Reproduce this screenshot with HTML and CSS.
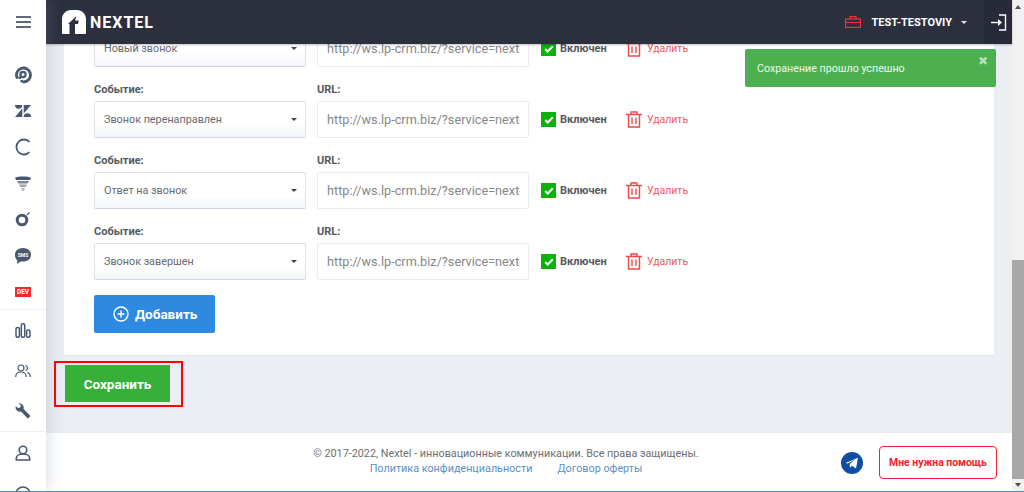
FILE: index.html
```html
<!DOCTYPE html>
<html lang="ru">
<head>
<meta charset="utf-8">
<title>Nextel</title>
<link rel="stylesheet" href="styles.css">
</head>
<body>
<div class="app">
  <aside class="sidebar">
    <div class="burger"><span></span><span></span><span></span></div>
    <nav class="nav-group nav-a">
      <a class="nav-item"><svg width="18" height="18" viewBox="0 0 18 18"><path d="M3.400 12.500A7 7 0 1 1 9 16" fill="none" stroke="#485870" stroke-width="2.800"/><circle cx="9" cy="8.500" r="2.600" fill="none" stroke="#485870" stroke-width="2.200"/><path d="M4.500 10.500h2.500V13H4.500zM6.500 14H9v2.500H6.500z" fill="#485870"/></svg></a>
      <a class="nav-item"><svg width="16" height="12" viewBox="0 0 16 12"><path d="M0 0h7.300a3.650 3.650 0 0 1-7.300 0zM0 12L7.300 3.500V12zM8.700 0H16L8.700 8.500zM8.700 12a3.650 3.650 0 0 1 7.300 0z" fill="#485870"/></svg></a>
      <a class="nav-item"><svg width="18" height="18" viewBox="0 0 18 18"><path d="M15.500 4A7.500 7.500 0 1 0 15.500 14" fill="none" stroke="#485870" stroke-width="1.800"/></svg></a>
      <a class="nav-item"><svg width="16" height="15" viewBox="0 0 16 15"><path d="M0 1.500C3 0 13 0 16 1.500L15 4H1z" fill="#485870"/><path d="M2 5h12l-1.500 2.500h-9z" fill="#7b8491"/><path d="M4 8.500h8L10.800 11H5.200z" fill="#9aa2ac"/><path d="M6 12h4l-1 3H7z" fill="#b6bcc4"/></svg></a>
      <a class="nav-item"><svg width="16" height="16" viewBox="0 0 16 16"><circle cx="7" cy="9" r="4.800" fill="none" stroke="#485870" stroke-width="3"/><path d="M12 4l2.500-2.500" stroke="#485870" stroke-width="1.200"/></svg></a>
      <a class="nav-item"><svg width="18" height="18" viewBox="0 0 18 18"><path d="M9 1c4.700 0 8 2.800 8 6.800s-3.300 6.800-8 6.800H6.500L3 17l.4-3.500C1.800 12.200 1 10.200 1 7.800 1 3.800 4.300 1 9 1z" fill="#485870"/><text class="sms" x="9" y="10">SMS</text></svg></a>
      <a class="nav-item"><span class="dev">DEV</span></a>
    </nav>
    <nav class="nav-group nav-b">
      <a class="nav-item"><svg width="16" height="15" viewBox="0 0 16 15"><g fill="none" stroke="#485870" stroke-width="1.500"><rect x="1" y="4.500" width="3.400" height="9.800" rx="1.500"/><rect x="6.300" y=".8" width="3.400" height="13.500" rx="1.500"/><rect x="11.600" y="7" width="3.400" height="7.300" rx="1.500"/></g></svg></a>
      <a class="nav-item"><svg width="16" height="14" viewBox="0 0 16 14"><g fill="none" stroke="#485870" stroke-width="1.200"><circle cx="6" cy="4" r="3"/><path d="M.7 13c0-3 2.200-5 5.300-5s5.300 2 5.300 5M10.500 1.200a3 3 0 0 1 0 5.600M12.500 8.500c1.700.7 2.800 2.300 2.800 4.500"/></g></svg></a>
      <a class="nav-item"><svg width="16" height="16" viewBox="0 0 16 16"><path d="M.6 3.600a4.400 4.400 0 0 0 5.400 5l6.800 6.900 2.700-2.600-7-7A4.400 4.400 0 0 0 3.600.3L6.200 3 4 5.300z" fill="#485870"/></svg></a>
    </nav>
    <nav class="nav-group nav-c">
      <a class="nav-item"><svg width="16" height="16" viewBox="0 0 16 16"><g fill="none" stroke="#485870" stroke-width="1.600"><circle cx="8" cy="5" r="3.800"/><path d="M8 9c-3.800 0-6.700 1.800-6.700 4.200V15h13.400v-1.800C14.700 10.800 11.800 9 8 9z"/></g></svg></a>
      <a class="nav-item"><svg width="16" height="16" viewBox="0 0 16 16"><circle cx="8" cy="8" r="7" fill="none" stroke="#485870" stroke-width="1.600"/></svg></a>
    </nav>
  </aside>

  <div class="main">
    <header class="topbar">
      <div class="logo">
        <svg width="24" height="24" viewBox="0 0 24 24"><path fill-rule="evenodd" d="M1 24a1 1 0 0 1-1-1V9C0 4 4 0 9 0h6c5 0 9 4 9 9v14a1 1 0 0 1-1 1zM7.500 24h5.500V14h3l.7-3.500H13L14.500 6 6 14h1.500z" fill="#fff"/></svg>
        <span class="logo-text">NEXTEL</span>
      </div>
      <div class="account">
        <svg width="16" height="12" viewBox="0 0 16 12"><g fill="none" stroke="#e23a3a" stroke-width="1.200"><rect x=".6" y="3" width="14.800" height="8.400"/><path d="M5 3V.7h6V3M.6 6.500h14.800"/></g></svg>
        <span class="account-name">TEST-TESTOVIY</span>
        <span class="caret caret-light"></span>
      </div>
      <a class="logout"><svg width="17" height="17" viewBox="0 0 17 17"><g fill="none" stroke="#fff" stroke-width="1.400"><path d="M9 1h6.500v15H9"/><path d="M1 8.500h8"/></g><path d="M8 5l4 3.500L8 12z" fill="#fff"/></svg></a>
    </header>

    <div class="toast">
      <span>Сохранение прошло успешно</span>
      <span class="toast-close">✖</span>
    </div>

    <div class="content">
      <section class="card">
        <div class="row row-first">
          <div class="field field-select">
            <div class="select"><span>Новый звонок</span><span class="caret"></span></div>
          </div>
          <div class="field field-url">
            <div class="input"><span class="input-value">http://ws.lp-crm.biz/?service=nextel</span></div>
          </div>
          <div class="state"><span class="check"><svg width="10" height="8" viewBox="0 0 10 8"><path d="M1.200 4l2.500 2.500L8.800 1.200" fill="none" stroke="#fff" stroke-width="2"/></svg></span>Включен</div>
          <a class="delete"><svg width="16" height="17" viewBox="0 0 16 17"><g fill="none" stroke="#f0484c" stroke-width="1.400"><path d="M0 3.500h16M5 3.500V1h6v2.500M2.500 3.500V16h11V3.500M6 6.500V13M10 6.500V13"/></g></svg>Удалить</a>
        </div>
        <div class="row">
          <div class="field field-select">
            <label class="label">Событие:</label>
            <div class="select"><span>Звонок перенаправлен</span><span class="caret"></span></div>
          </div>
          <div class="field field-url">
            <label class="label">URL:</label>
            <div class="input"><span class="input-value">http://ws.lp-crm.biz/?service=nextel</span></div>
          </div>
          <div class="state"><span class="check"><svg width="10" height="8" viewBox="0 0 10 8"><path d="M1.200 4l2.500 2.500L8.800 1.200" fill="none" stroke="#fff" stroke-width="2"/></svg></span>Включен</div>
          <a class="delete"><svg width="16" height="17" viewBox="0 0 16 17"><g fill="none" stroke="#f0484c" stroke-width="1.400"><path d="M0 3.500h16M5 3.500V1h6v2.500M2.500 3.500V16h11V3.500M6 6.500V13M10 6.500V13"/></g></svg>Удалить</a>
        </div>
        <div class="row">
          <div class="field field-select">
            <label class="label">Событие:</label>
            <div class="select"><span>Ответ на звонок</span><span class="caret"></span></div>
          </div>
          <div class="field field-url">
            <label class="label">URL:</label>
            <div class="input"><span class="input-value">http://ws.lp-crm.biz/?service=nextel</span></div>
          </div>
          <div class="state"><span class="check"><svg width="10" height="8" viewBox="0 0 10 8"><path d="M1.200 4l2.500 2.500L8.800 1.200" fill="none" stroke="#fff" stroke-width="2"/></svg></span>Включен</div>
          <a class="delete"><svg width="16" height="17" viewBox="0 0 16 17"><g fill="none" stroke="#f0484c" stroke-width="1.400"><path d="M0 3.500h16M5 3.500V1h6v2.500M2.500 3.500V16h11V3.500M6 6.500V13M10 6.500V13"/></g></svg>Удалить</a>
        </div>
        <div class="row">
          <div class="field field-select">
            <label class="label">Событие:</label>
            <div class="select"><span>Звонок завершен</span><span class="caret"></span></div>
          </div>
          <div class="field field-url">
            <label class="label">URL:</label>
            <div class="input"><span class="input-value">http://ws.lp-crm.biz/?service=nextel</span></div>
          </div>
          <div class="state"><span class="check"><svg width="10" height="8" viewBox="0 0 10 8"><path d="M1.200 4l2.500 2.500L8.800 1.200" fill="none" stroke="#fff" stroke-width="2"/></svg></span>Включен</div>
          <a class="delete"><svg width="16" height="17" viewBox="0 0 16 17"><g fill="none" stroke="#f0484c" stroke-width="1.400"><path d="M0 3.500h16M5 3.500V1h6v2.500M2.500 3.500V16h11V3.500M6 6.500V13M10 6.500V13"/></g></svg>Удалить</a>
        </div>
        <button class="btn-add"><svg width="16" height="16" viewBox="0 0 16 16"><g fill="none" stroke="#fff" stroke-width="1.400"><circle cx="8" cy="8" r="7"/><path d="M8 4.500v7M4.500 8h7"/></g></svg>Добавить</button>
      </section>
      <div class="save-mark"><button class="btn-save">Сохранить</button></div>
    </div>

    <footer class="footer">
      <div class="footer-text">
        <div>© 2017-2022, Nextel - инновационные коммуникации. Все права защищены.</div>
        <div class="footer-links"><a>Политика конфиденциальности</a><a>Договор оферты</a></div>
      </div>
      <svg class="telegram" width="22" height="22" viewBox="0 0 22 22"><circle cx="11" cy="11" r="11" fill="#0b4ea2"/><path d="M4.500 11L17 5.800 15 16.500l-4-2.800-2 2-.4-3.500 5.400-5-7 4.300z" fill="#fff"/></svg>
      <a class="help">Мне нужна помощь</a>
    </footer>
  </div>

  <div class="scrollbar">
    <span class="arrow arrow-up"></span>
    <div class="scroll-track"><div class="scroll-thumb"></div></div>
    <span class="arrow arrow-down"></span>
  </div>
</div>
<div class="taskline"></div>
</body>
</html>
```

FILE: styles.css
```css
* { box-sizing: border-box; }
html, body { margin: 0; height: 100%; overflow: hidden; }
body { font-family: Roboto, "Noto Sans", sans-serif; color: #4b4f56; background: #fff; position: relative; }

.app { display: flex; height: 492px; }

/* sidebar */
.sidebar { width: 46px; flex: none; background: #fff; display: flex; flex-direction: column; box-shadow: 2px 0 16px rgba(120,135,160,.28); z-index: 2; overflow: hidden; }
.burger { height: 44px; padding-top: 16px; display: flex; flex-direction: column; align-items: center; gap: 3px; flex: none; }
.burger span { width: 15px; height: 2px; background: #5f6875; }
.nav-group { display: flex; flex-direction: column; flex: none; }
.nav-a { padding-top: 13px; height: 266px; border-bottom: 1px solid #edf0f4; }
.nav-b { height: 122px; border-bottom: 1px solid #edf0f4; }
.nav-item { display: flex; align-items: center; justify-content: center; flex: none; }
.nav-a .nav-item { height: 36.100px; }
.nav-b .nav-item { height: 40.500px; }
.nav-c .nav-item { height: 41px; }
.sms { font: 700 5px Roboto, sans-serif; fill: #fff; text-anchor: middle; }
.dev { display: block; width: 16px; height: 10px; background: #ee2b30; color: #fff; font: 700 6.500px/10px Roboto, sans-serif; text-align: center; }

/* main */
.main { flex: 1; min-width: 0; display: flex; flex-direction: column; position: relative; background: #ebeef3; }
.topbar { height: 44px; flex: none; background: #2c2f3e; display: flex; align-items: center; padding-left: 16px; box-shadow: 0 1px 2px rgba(0,0,0,.25); z-index: 1; }
.logo { display: flex; align-items: center; gap: 4px; }
.logo-text { color: #fff; font-weight: 700; font-size: 16px; letter-spacing: 1px; }
.account { margin-left: auto; display: flex; align-items: center; color: #fff; font-size: 11px; font-weight: 700; }
.account-name { margin-left: 10px; }
.caret { width: 0; height: 0; border-left: 3px solid transparent; border-right: 3px solid transparent; border-top: 3px solid #3e4248; flex: none; }
.caret-light { border-top-color: #e6e6e6; margin-left: 9px; }
.logout { width: 28px; height: 44px; margin-left: 17px; background: #272a38; display: flex; align-items: center; justify-content: center; }

.toast { position: absolute; left: 699px; top: 49px; width: 251px; height: 38px; background: #4caf50; border-radius: 2px; color: #eef8ee; font-size: 10.700px; display: flex; align-items: center; padding-left: 12px; z-index: 3; }
.toast-close { position: absolute; right: 8px; top: 5px; font-size: 12px; color: #b7dfb8; }

.content { height: 388px; flex: none; padding: 0 18px; overflow: hidden; }
.card { background: #fff; height: 312px; padding: 0 30px; border-bottom: 1px solid #e1e5ea; overflow: hidden; }
.row { display: flex; align-items: flex-end; height: 71px; }
.row-first { margin-top: -14px; height: 37px; }
.field { display: flex; flex-direction: column; }
.field-select { width: 212px; }
.field-url { width: 212px; margin-left: 11px; }
.label { font-size: 11px; font-weight: 700; line-height: 14px; margin-bottom: 4px; color: #55585e; }
.select { height: 37px; border: 1px solid #dde2e9; border-bottom-color: #cfd6df; border-radius: 2px; background: linear-gradient(#fff 60%, #f4f6f9); display: flex; align-items: center; justify-content: space-between; padding: 0 8px 0 9px; font-size: 10.800px; color: #666a70; }
.input { height: 37px; border: 1px solid #e9ecef; border-radius: 2px; background: #fff; padding: 0 8px 0 9px; font-size: 12.700px; line-height: 35px; color: #85878a; }
.input-value { display: block; white-space: nowrap; overflow: hidden; }
.state { display: flex; align-items: center; height: 37px; margin-left: 12px; font-size: 11px; font-weight: 700; color: #55585e; gap: 4px; width: 85px; }
.check { width: 15px; height: 15px; background: #0cb20c; display: flex; align-items: center; justify-content: center; flex: none; }
.delete { display: flex; align-items: center; height: 37px; gap: 5px; color: #f2585b; font-size: 10.500px; }
.btn-add { display: flex; align-items: center; gap: 6px; margin-top: 15px; width: 121px; height: 38px; padding: 0 0 0 19px; background: #2e8ae0; border: 0; border-radius: 2px; color: #fff; font: 700 13.500px Roboto, sans-serif; }

.save-mark { display: flex; width: 129px; height: 46px; margin: 5px 0 0 -10px; border: 2px solid #f00; padding: 2px 11px 0 9px; }
.btn-save { width: 105px; height: 37px; background: #37b03a; border: 0; color: #fff; font: 700 13.500px Roboto, sans-serif; }

.footer { flex: 1; background: #fff; display: flex; align-items: center; padding: 0 15px 0 125px; border-top: 1px solid #e8ebf0; }
.footer-text { flex: 1; text-align: center; font-size: 10.800px; line-height: 15px; color: #6b6e73; padding-bottom: 3px; }
.footer-links { display: flex; justify-content: center; gap: 25px; color: #5b8fc7; }
.telegram { flex: none; }
.help { margin-left: 16px; width: 118px; height: 33px; border: 1.500px solid #f2222e; border-radius: 4px; display: flex; align-items: center; justify-content: center; color: #f2222e; font-size: 10.400px; font-weight: 700; flex: none; }

/* scrollbar */
.scrollbar { width: 12px; flex: none; background: #f1f1f1; display: flex; flex-direction: column; align-items: center; }
.scroll-track { flex: 1; width: 100%; padding-top: 248px; padding-bottom: 1px; display: flex; }
.scroll-thumb { flex: 1; background: #a8a8a8; }
.arrow { width: 0; height: 0; border-left: 3px solid transparent; border-right: 3px solid transparent; flex: none; }
.arrow-up { border-bottom: 4px solid #505050; margin: 5px 0 3px; }
.arrow-down { border-top: 4px solid #505050; margin: 3px 0 5px; }

.taskline { position: absolute; left: 0; right: 0; bottom: 0; height: 1px; background: #4a8ec9; z-index: 5; }
```
